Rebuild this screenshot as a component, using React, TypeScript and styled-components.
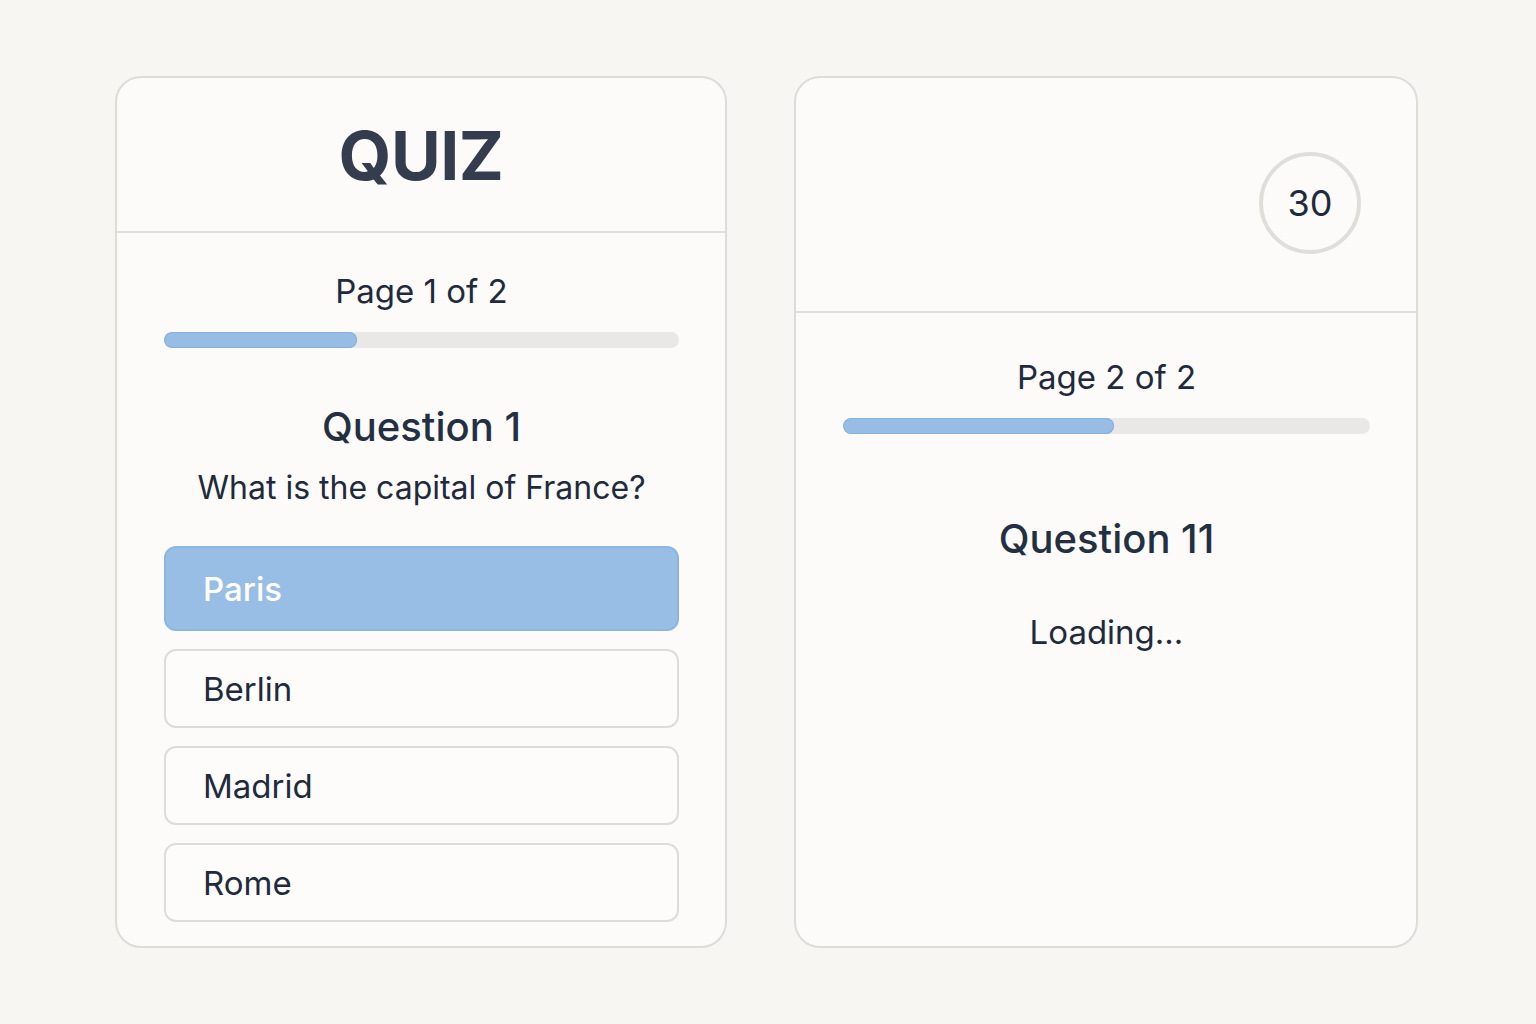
import React from "react";
import styled, { createGlobalStyle } from "styled-components";

const GlobalStyle = createGlobalStyle`
  html, body {
    margin: 0;
    padding: 0;
    background: #f8f6f3;
    font-family: "Inter", "Noto Sans", sans-serif;
    color: #1f2937;
  }
`;

const options = ["Paris", "Berlin", "Madrid", "Rome"];

function App(): React.ReactElement {
  const selected = "Paris";

  return (
    <>
      <GlobalStyle />
      <Page>
        <Card width={612}>
          <Header height={153}>
            <Title>QUIZ</Title>
          </Header>
          <Body top={38}>
            <PageLabel>Page 1 of 2</PageLabel>
            <Track>
              <Fill style={{ width: "37.5%" }} />
            </Track>
            <QuestionTitle top={54}>Question 1</QuestionTitle>
            <QuestionText>What is the capital of France?</QuestionText>
            <Options>
              {options.map(opt => (
                <Option key={opt} active={opt === selected}>
                  {opt}
                </Option>
              ))}
            </Options>
          </Body>
        </Card>

        <Card width={624}>
          <Header height={233}>
            <TimerRow>
              <Timer>30</Timer>
            </TimerRow>
          </Header>
          <Body top={44}>
            <PageLabel>Page 2 of 2</PageLabel>
            <Track>
              <Fill style={{ width: "51.5%" }} />
            </Track>
            <QuestionTitle top={80}>Question 11</QuestionTitle>
            <Loading>Loading...</Loading>
          </Body>
        </Card>
      </Page>
    </>
  );
}

export default App;

const Page = styled.div`
  display: flex;
  justify-content: flex-start;
  align-items: flex-start;
  gap: 67px;
  padding: 76px 0 0 115px;
  min-height: 1024px;
  box-sizing: border-box;
`;

const Card = styled.div<{ width: number }>`
  width: ${p => p.width}px;
  flex-shrink: 0;
  height: 872px;
  box-sizing: border-box;
  background: #fcfbf9;
  border: 2px solid #dedcd8;
  border-radius: 26px;
  display: flex;
  flex-direction: column;
  overflow: hidden;
`;

const Header = styled.div<{ height: number }>`
  height: ${p => p.height}px;
  flex-shrink: 0;
  border-bottom: 2px solid #e1dfdb;
  display: flex;
  align-items: center;
  justify-content: center;
`;

const Title = styled.h1`
  margin: 0;
  font-size: 68px;
  font-weight: 700;
  letter-spacing: -0.5px;
  color: #343d4d;
`;

const TimerRow = styled.div`
  width: 100%;
  display: flex;
  justify-content: flex-end;
  padding: 16px 55px 0 0;
  box-sizing: border-box;
`;

const Timer = styled.div`
  width: 102px;
  height: 102px;
  box-sizing: border-box;
  border: 4px solid #dfdedb;
  border-radius: 50%;
  display: flex;
  align-items: center;
  justify-content: center;
  font-size: 36px;
  color: #1f2a3c;
`;

const Body = styled.div<{ top: number }>`
  display: flex;
  flex-direction: column;
  align-items: center;
  padding: ${p => p.top}px 46px 0 47px;
`;

const PageLabel = styled.div`
  font-size: 33px;
  line-height: 40px;
  color: #1f2a3c;
`;

const Track = styled.div`
  width: 100%;
  height: 16px;
  margin-top: 21px;
  border-radius: 8px;
  background: #e9e8e6;
  overflow: hidden;
`;

const Fill = styled.div`
  height: 100%;
  border-radius: 8px;
  background: #97bde5;
  box-shadow: inset 0 0 0 1px #86b0de;
`;

const QuestionTitle = styled.h2<{ top: number }>`
  margin: ${p => p.top}px 0 0 0;
  font-size: 40px;
  line-height: 50px;
  font-weight: 500;
  color: #243041;
`;

const QuestionText = styled.p`
  margin: 16px 0 0 0;
  font-size: 32px;
  line-height: 40px;
  color: #1f2a3c;
`;

const Options = styled.div`
  width: 100%;
  display: flex;
  flex-direction: column;
  gap: 18px;
  margin-top: 38px;
`;

const Option = styled.button<{ active: boolean }>`
  height: ${p => (p.active ? 85 : 79)}px;
  flex-shrink: 0;
  box-sizing: border-box;
  width: 100%;
  text-align: left;
  padding: 0 0 0 37px;
  border-radius: 12px;
  font-family: inherit;
  font-size: 33px;
  font-weight: ${p => (p.active ? 500 : 400)};
  color: ${p => (p.active ? "#ffffff" : "#1f2a3c")};
  background: ${p => (p.active ? "#99bee5" : "#fdfcfb")};
  border: 2px solid ${p => (p.active ? "#8db5e1" : "#dedcd8")};
  cursor: pointer;
`;

const Loading = styled.div`
  margin-top: 48px;
  font-size: 33px;
  line-height: 40px;
  color: #1f2a3c;
`;
